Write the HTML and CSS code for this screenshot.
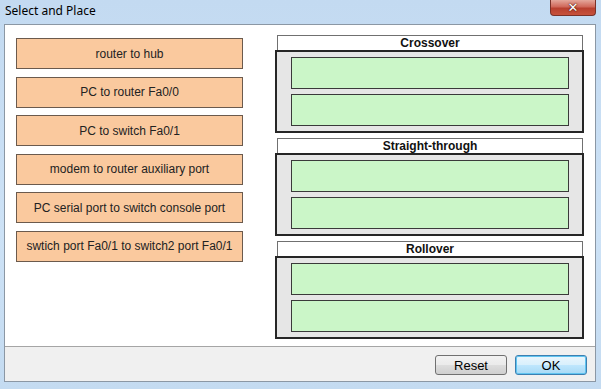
FILE: index.html
```html
<!DOCTYPE html>
<html lang="en">
<head>
  <meta charset="UTF-8" />
  <title>Select and Place</title>
  <link rel="stylesheet" href="styles.css">
</head>
<body>
  <div class="window">
    <div class="titlebar">
      <span class="title">Select and Place</span>
      <button class="close-btn">&#x2715;</button>
    </div>

    <div class="panel">
      <div class="content">
        <div class="options">
          <div class="option">router to hub</div>
          <div class="option">PC to router Fa0/0</div>
          <div class="option">PC to switch Fa0/1</div>
          <div class="option">modem to router auxiliary port</div>
          <div class="option">PC serial port to switch console port</div>
          <div class="option">swtich port Fa0/1 to switch2 port Fa0/1</div>
        </div>

        <div class="targets">
          <div class="group">
            <div class="group-head">Crossover</div>
            <div class="group-body">
              <div class="slot"></div>
              <div class="slot"></div>
            </div>
          </div>
          <div class="group">
            <div class="group-head">Straight-through</div>
            <div class="group-body">
              <div class="slot"></div>
              <div class="slot"></div>
            </div>
          </div>
          <div class="group">
            <div class="group-head">Rollover</div>
            <div class="group-body">
              <div class="slot"></div>
              <div class="slot"></div>
            </div>
          </div>
        </div>
      </div>

      <div class="footer">
        <button class="btn">Reset</button>
        <button class="btn btn-default">OK</button>
      </div>
    </div>
  </div>
</body>
</html>
```

FILE: styles.css
```css
body {
  margin: 0;
  font-family: "Liberation Sans", Arial, sans-serif;
}
.window {
  width: 601px;
  height: 389px;
  box-sizing: border-box;
  background: linear-gradient(180deg, #c3daf1 0%, #cde2f6 60%, #c4dbf1 100%);
  display: flex;
  flex-direction: column;
  padding: 0 5px 7px 4px;
}
.titlebar {
  height: 24px;
  display: flex;
  justify-content: space-between;
  align-items: flex-start;
}
.title {
  font-family: "Noto Sans", "Open Sans", sans-serif;
  font-size: 12px;
  color: #000;
  margin: 2px 0 0 1px;
}
.close-btn {
  width: 46px;
  height: 16px;
  padding: 0;
  border: 1px solid #7a3128;
  border-top: none;
  border-radius: 0 0 4px 4px;
  background: linear-gradient(180deg, #e4a79b 0%, #d0685a 45%, #b8402f 55%, #c7523c 100%);
  color: #fff;
  font-family: "DejaVu Sans", sans-serif;
  font-size: 13px;
  font-weight: bold;
  line-height: 14px;
  text-shadow: 0 0 2px #4a130a, 0 0 1px #4a130a;
}
.panel {
  flex: 1;
  display: flex;
  flex-direction: column;
  background: #fff;
  border: 1px solid #8b97a4;
}
.content {
  flex: 1;
  display: flex;
  justify-content: space-between;
  padding: 10px 11px 0 11px;
}
.options {
  width: 227px;
  display: flex;
  flex-direction: column;
  gap: 7.6px;
  padding-top: 3px;
}
.option {
  height: 29px;
  background: #fac99e;
  border: 1px solid #6b5a4d;
  display: flex;
  align-items: center;
  justify-content: center;
  font-size: 12px;
  color: #222;
}
.targets {
  width: 309px;
  display: flex;
  flex-direction: column;
  gap: 5px;
}
.group-head {
  margin: 0 1px 0 2px;
  height: 14px;
  background: #fff;
  border: 1px solid #707070;
  border-bottom: none;
  text-align: center;
  font-size: 12px;
  font-weight: bold;
  line-height: 14px;
  color: #111;
}
.group-body {
  background: #e6e6e6;
  border: 2px solid #262626;
  padding: 5px 13px 5px 14px;
  display: flex;
  flex-direction: column;
  gap: 5px;
}
.slot {
  height: 30px;
  background: #cbf6c8;
  border: 1px solid #3a3a3a;
}
.footer {
  height: 35px;
  box-sizing: border-box;
  border-top: 1px solid #a5a5a5;
  background: #f0f0f0;
  display: flex;
  justify-content: flex-end;
  align-items: flex-start;
  gap: 8px;
  padding: 8px 8px 0 0;
}
.btn {
  width: 72px;
  height: 20px;
  padding: 0;
  border: 1px solid #707070;
  border-radius: 3px;
  background: linear-gradient(180deg, #f2f2f2 0%, #ebebeb 48%, #dddddd 52%, #cfcfcf 100%);
  font-family: "Liberation Sans", Arial, sans-serif;
  font-size: 13px;
  color: #000;
}
.btn-default {
  border-color: #3c7fb1;
  box-shadow: inset 0 0 0 1px #5fc4f0;
  background: linear-gradient(180deg, #eaf6fd 0%, #d9f0fc 48%, #bee6fd 52%, #a7d9f5 100%);
}
```
